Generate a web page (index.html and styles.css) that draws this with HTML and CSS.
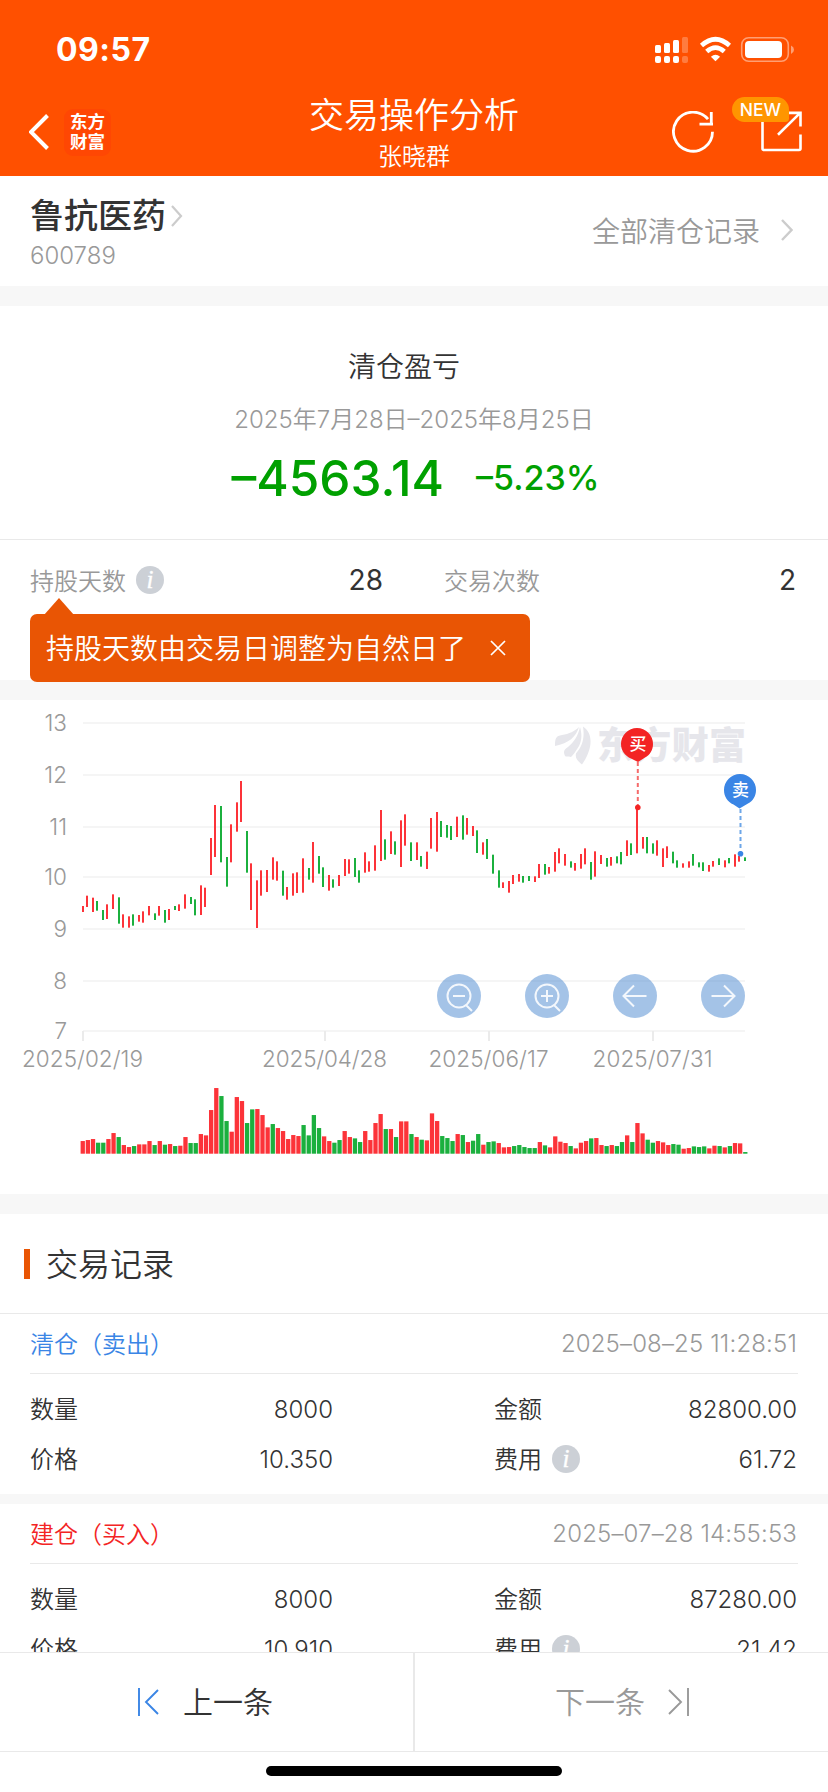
FILE: index.html
```html
<!DOCTYPE html>
<html lang="zh-CN">
<head>
	<meta charset="UTF-8">
	<title>交易操作分析</title>
	<link rel="stylesheet" href="styles.css">
</head>
<body>
<header class="header">
	<div class="status">
		<span class="clock">09:57</span>
		<svg class="status-icons" width="140" height="30" viewBox="655 35 140 30">
			<g fill="#fff">
				<rect x="655" y="45" width="6" height="8" rx="1.5"/>
				<rect x="664" y="43" width="6" height="10" rx="1.5"/>
				<rect x="673" y="40" width="6" height="13" rx="1.5"/>
				<rect x="655" y="56" width="6" height="7" rx="2"/>
				<rect x="664" y="56" width="6" height="7" rx="2"/>
				<rect x="673" y="56" width="6" height="7" rx="2"/>
				<g opacity=".25">
					<rect x="682" y="37" width="6" height="16" rx="1.5"/>
					<rect x="682" y="56" width="6" height="7" rx="2"/>
				</g>
				<rect x="745" y="41" width="37" height="17" rx="4"/>
				<path d="M791 45.500q3 1.500 3 4.300t-3 4.300z" opacity=".45"/>
				<path d="M715.500 61.200l-4.600-4.500q4.600-3.800 9.200 0z"/>
			</g>
			<rect x="741.700" y="37.700" width="46.600" height="23.600" rx="7" fill="none" stroke="#fff" stroke-width="1.600" opacity=".45"/>
			<path d="M701.500 45.500q14-12.500 28 0M706.700 51.500q8.800-7.800 17.600 0" fill="none" stroke="#fff" stroke-width="4.600"/>
		</svg>
	</div>
	<div class="navbar">
		<div class="nav-left">
			<svg width="20" height="36" viewBox="0 0 20 36"><path d="M18.500 1.500L2 18l16.500 16.500" fill="none" stroke="#fff" stroke-width="4"/></svg>
			<div class="logo">东方<br>财富</div>
		</div>
		<div class="nav-title">
			<h1>交易操作分析</h1>
			<p>张晓群</p>
		</div>
		<div class="nav-right">
			<svg width="42" height="42" viewBox="672.500 111 42 42"><path d="M713 131.700A19.500 19.500 0 1 1 708.500 119.200M711.800 112v12.500M700 124.200h13.500" fill="none" stroke="#fff" stroke-width="2.800"/></svg>
			<div class="share">
				<svg width="41" height="41" viewBox="761 111.500 41 41"><path d="M762.500 116v33q0 1.500 1.500 1.500h35q1.500 0 1.500-1.500V135M787 113.400h13.500V127M778 135.200L800.200 113.400" fill="none" stroke="#fff" stroke-width="2.600"/></svg>
				<span class="badge">NEW</span>
			</div>
		</div>
	</div>
</header>

<main class="content">
	<section class="stock">
		<div>
			<h2>鲁抗医药<svg width="12" height="22" viewBox="0 0 12 22"><path d="M1 1l9 10-9 10" fill="none" stroke="#ccc" stroke-width="2.200"/></svg></h2>
			<p class="code">600789</p>
		</div>
		<a class="all-records">全部清仓记录<svg width="12" height="22" viewBox="0 0 12 22"><path d="M1 1l9.500 10L1 21" fill="none" stroke="#ccc" stroke-width="2.400"/></svg></a>
	</section>

	<section class="profit">
		<h3>清仓盈亏</h3>
		<p class="period">2025年7月28日–2025年8月25日</p>
		<div class="amounts">
			<span class="amount">–4563.14</span>
			<span class="percent">–5.23%</span>
		</div>
	</section>

	<section class="stats">
		<div class="stat"><span class="label">持股天数</span><i class="info">i</i><b>28</b></div>
		<div class="stat"><span class="label">交易次数</span><b>2</b></div>
		<div class="tip">
			<span>持股天数由交易日调整为自然日了</span>
			<svg width="16" height="16" viewBox="0 0 16 16"><path d="M1 1l14 14M15 1L1 15" stroke="#fff" stroke-width="1.700"/></svg>
		</div>
	</section>

	<section class="chart">
		<svg id="chart" width="828" height="494" viewBox="0 700 828 494">
			<g id="grid"></g>
			<g id="candles"></g>
			<g id="volumes"></g>
			<g class="watermark">
				<path d="M555 746c0-8 1-10 7-11 7-1 13-4 17-8-3 10-10 16-24 19zM565 756c-2-5-1-6 3-9 6-5 10-11 12-20 2 7 2 13-1 19-3 5-6 9-8 11-3-1-5 0-6-1zM582 764.500c-5-4-7-7-6-11 6-7 9-15 7-27 9 6 9 17 5 27-2 5-4 8-6 11z"/>
				<text x="597" y="759" textLength="149">东方财富</text>
			</g>
			<g class="pin">
				<path d="M637.800 762v44" stroke="#f56b6b" stroke-width="2" stroke-dasharray="4 3"/>
				<circle cx="637.800" cy="807.500" r="2.800" fill="#f32424"/>
				<path d="M637 728a16 16 0 0 1 16 16c0 6-3 11-8 13.500L638 762l-7-3.500c-6-2.500-10-8-10-14.500a16 16 0 0 1 16-16z" fill="#f32424"/>
				<text x="638" y="750">买</text>
			</g>
			<g class="pin">
				<path d="M740.500 809v44" stroke="#6da6e8" stroke-width="2" stroke-dasharray="4 3"/>
				<circle cx="740.500" cy="853.800" r="2.800" fill="#3a85e5"/>
				<path d="M740 774a16 16 0 0 1 16 16c0 6-3 11-8 13.500L739.500 808.500l-6-4c-6-2.500-9.500-8-9.500-14.500a16 16 0 0 1 16-16z" fill="#3a85e5"/>
				<text x="740.500" y="796">卖</text>
			</g>
			<g class="tools">
				<circle cx="459" cy="996" r="22"/>
				<circle cx="547" cy="996" r="22"/>
				<circle cx="635" cy="996" r="22"/>
				<circle cx="723" cy="996" r="22"/>
				<path d="M470.500 996a11.500 11.500 0 1 1-23 0 11.500 11.500 0 1 1 23 0zM453 996h12M466 1005l6 6"/>
				<path d="M558.500 996a11.500 11.500 0 1 1-23 0 11.500 11.500 0 1 1 23 0zM541 996h12M547 990v12M554 1005l6 6"/>
				<path d="M646.500 996h-23M634 985.500L623.500 996l10.500 10.500"/>
				<path d="M711.500 996h23M724 985.500l10.500 10.500-10.500 10.500"/>
			</g>
		</svg>
	</section>

	<section class="records">
		<h3 class="records-title"><span>交易记录</span></h3>
		<article class="record">
			<div class="record-head"><span class="sell">清仓（卖出）</span><time>2025–08–25 11:28:51</time></div>
			<dl>
				<div><dt>数量</dt><dd>8000</dd></div>
				<div><dt>金额</dt><dd>82800.00</dd></div>
				<div><dt>价格</dt><dd>10.350</dd></div>
				<div><dt>费用</dt><i class="info">i</i><dd>61.72</dd></div>
			</dl>
		</article>
		<article class="record">
			<div class="record-head"><span class="buy">建仓（买入）</span><time>2025–07–28 14:55:53</time></div>
			<dl>
				<div><dt>数量</dt><dd>8000</dd></div>
				<div><dt>金额</dt><dd>87280.00</dd></div>
				<div><dt>价格</dt><dd>10.910</dd></div>
				<div><dt>费用</dt><i class="info">i</i><dd>21.42</dd></div>
			</dl>
		</article>
	</section>
</main>

<footer class="footer">
	<div class="pager">
		<a class="prev"><svg width="22" height="28" viewBox="0 0 22 28"><path d="M1 0v28M20 2L8 14l12 12" fill="none" stroke="#3a85e5" stroke-width="1.900"/></svg><span>上一条</span></a>
		<a class="next"><span>下一条</span><svg width="22" height="28" viewBox="0 0 22 28"><path d="M20 0v28M1 2l12 12L1 26" fill="none" stroke="#999" stroke-width="1.900"/></svg></a>
	</div>
	<div class="home-bar"></div>
</footer>
<script src="chart.js"></script>
</body>
</html>
```
FILE: styles.css
```css
* {
    box-sizing: border-box;
    margin: 0;
    padding: 0;
}
body {
    display: flex;
    flex-direction: column;
    width: 828px;
    height: 1792px;
    overflow: hidden;
    background: #fff;
    color: #333;
    font-family: Inter, "Noto Sans CJK SC", sans-serif;
    font-size: 24px;
    font-weight: 350;
}
svg {
    display: block;
    flex: none;
}
h1, h2, h3 {
    font-weight: 350;
}

/* header */
.header {
    flex: none;
    height: 176px;
    background: #ff5000;
    color: #fff;
}
.status {
    display: flex;
    justify-content: space-between;
    height: 88px;
    padding: 35px 33px 0 56px;
}
.clock {
    font-size: 32px;
    font-weight: 700;
    line-height: 30px;
    letter-spacing: 0.5px;
}
.navbar {
    display: grid;
    grid-template-columns: 1fr 300px 1fr;
    height: 88px;
}
.nav-left {
    display: flex;
    align-items: center;
    gap: 15px;
    padding-left: 29px;
}
.logo {
    width: 47px;
    height: 47px;
    padding-top: 3px;
    border-radius: 9px;
    background: #ff4703;
    font-size: 17.5px;
    font-weight: 700;
    line-height: 20px;
    text-align: center;
}
.nav-title {
    text-align: center;
}
.nav-title h1 {
    padding-top: 1px;
    font-size: 35px;
    line-height: 52px;
}
.nav-title p {
    font-size: 24px;
    line-height: 32px;
}
.nav-right {
    display: flex;
    justify-content: flex-end;
    gap: 47px;
    padding: 23px 26px 0 0;
}
.share {
    position: relative;
}
.badge {
    position: absolute;
    left: -29px;
    top: -14px;
    width: 57px;
    height: 25px;
    border-radius: 13px 13px 4px 13px;
    background: #ff9500;
    font-size: 17.5px;
    font-weight: 500;
    line-height: 26px;
    text-align: center;
}

/* stock */
.content {
    flex: 1;
    min-height: 0;
    overflow: hidden;
}
.stock {
    display: flex;
    justify-content: space-between;
    height: 130px;
    padding: 15px 35px 0 30px;
    border-bottom: 20px solid #f7f7f7;
}
.stock h2 {
    display: flex;
    align-items: center;
    gap: 5px;
    font-size: 34px;
    font-weight: 500;
    line-height: 50px;
}
.code {
    color: #999;
    line-height: 30px;
}
.all-records {
    display: flex;
    align-items: center;
    gap: 21px;
    height: 78px;
    color: #999;
    font-size: 28px;
}

/* profit */
.profit {
    height: 233px;
    padding-top: 41px;
    text-align: center;
}
.profit h3 {
    padding-right: 20px;
    font-size: 28px;
    line-height: 40px;
}
.period {
    padding-top: 16px;
    color: #999;
    line-height: 34px;
}
.amounts {
    display: flex;
    justify-content: center;
    align-items: center;
    gap: 32px;
    padding: 6px 0 0 3px;
    color: #00a000;
    font-weight: 500;
    line-height: 70px;
}
.amount {
    font-size: 49.5px;
}
.percent {
    font-size: 34px;
}
.stats {
    position: relative;
    display: grid;
    grid-template-columns: 353px 352px;
    column-gap: 61px;
    height: 161px;
    padding: 20px 30px 0;
    border-top: 1px solid #e9e9e9;
    border-bottom: 20px solid #f7f7f7;
}
.stat {
    display: flex;
    align-items: center;
    height: 40px;
}
.stat .label {
    padding-bottom: 2px;
    color: #999;
}
.stat b {
    margin-left: auto;
    font-size: 28px;
    font-weight: 400;
}
.info {
    width: 28px;
    height: 28px;
    margin-left: 10px;
    border-radius: 50%;
    background: #ccd0d6;
    color: #fff;
    font: italic 25px/27px "Liberation Serif", serif;
    text-align: center;
    -webkit-text-stroke: 0.4px #fff;
}
.tip {
    position: absolute;
    left: 30px;
    top: 74px;
    z-index: 1;
    display: flex;
    align-items: center;
    gap: 24px;
    width: 500px;
    height: 68px;
    padding-left: 16px;
    border-radius: 7px;
    background: #e95504;
    color: #fff;
    font-size: 28px;
}
.tip span {
    padding-bottom: 2px;
}
.tip::before {
    content: "";
    position: absolute;
    left: 14px;
    top: -16px;
    border: solid transparent;
    border-width: 0 15px 17px;
    border-bottom-color: #e95504;
}

/* chart */
.chart {
    height: 514px;
    border-bottom: 20px solid #f7f7f7;
}
.axis {
    fill: #999;
    font-size: 22.5px;
}
.watermark {
    fill: #e6e6eb;
    font-size: 37px;
    font-weight: 900;
}
.pin text {
    fill: #fff;
    font-size: 17px;
    font-weight: 500;
    text-anchor: middle;
}
.tools circle {
    fill: #4182cc;
    fill-opacity: 0.48;
}
.tools path {
    fill: none;
    stroke: #f3f7fc;
    stroke-width: 2;
}

/* records */
.records-title {
    display: flex;
    align-items: center;
    gap: 16px;
    height: 99px;
    padding-left: 24px;
    font-size: 32px;
}
.records-title span {
    padding-bottom: 4px;
}
.records-title::before {
    content: "";
    width: 6px;
    height: 30px;
    background: #e95504;
}
.record {
    height: 191px;
    padding: 0 30px;
    border-bottom: 10px solid #f7f7f7;
}
.records-title + .record {
    border-top: 1px solid #e9e9e9;
}
.record-head {
    display: flex;
    justify-content: space-between;
    align-items: center;
    height: 60px;
    padding-right: 1px;
    border-bottom: 1px solid #e9e9e9;
}
.record-head span, .record dt {
    padding-bottom: 3px;
}
.record time {
    color: #999;
    letter-spacing: 0.15px;
}
.sell {
    color: #3a85e5;
}
.buy {
    color: #f32424;
}
.record dl {
    display: grid;
    grid-template-columns: 303px 303px;
    justify-content: space-between;
    grid-auto-rows: 50px;
    padding: 10px 1px 0 0;
}
.record dl div {
    display: flex;
    align-items: center;
}
.record dd {
    margin-left: auto;
}

/* footer */
.footer {
    flex: none;
    height: 140px;
    background: #fff;
}
.pager {
    display: grid;
    grid-template-columns: 415px 413px;
    height: 100px;
    border: solid #e9e9e9;
    border-width: 1px 0;
}
.pager a {
    display: flex;
    align-items: center;
    justify-content: center;
    gap: 23px;
    font-size: 30px;
}
.pager span {
    padding-bottom: 4px;
}
.prev {
    padding-right: 2px;
    border-right: 2px solid #e9e9e9;
}
.next {
    padding-left: 2px;
    color: #999;
}
.home-bar {
    width: 296px;
    height: 10px;
    margin: 14px auto 0;
    border-radius: 5px;
    background: #000;
}
```
FILE: chart.js
```js
// top, bottom and colour of each day's price line, three units to a pixel from y = 700
var prices = "618-636r 587-621r 593-636r 603-632g 630-660g 613-657r 583-627r 592-671g 643-683r 649-683r 643-677g 645-665r 634-668r 618-646r 640-660g 618-647r 630-668g 627-660r 618-630g 613-633r " +
	"583-626r 591-612g 598-646g 556-645r 563-621r 414-525r 315-471r 318-487g 471-560g 373-487r 307-395r 243-366r 393-518g 490-630r 541-684r 511-587r 510-576r 472-539r 484-542r 512-587g " +
	"561-599r 520-587r 517-579r 475-578r 504-539g 426-548r 468-521g 502-561g 525-572r 538-563g 525-558r 477-528r 478-521r 474-531g 511-548g 457-518r 484-515r 436-512r 330-483r 418-479g " +
	"394-462r 424-464g 361-501r 343-437r 427-483g 427-480r 468-500g 455-507r 354-446r 336-455r 363-411g 375-413g 378-420g 350-411r 346-419g 354-404r 378-408r 391-459g 427-464r 417-477g " +
	"464-521g 511-563g 547-564r 543-578r 525-552r 522-545r 528-548g 528-543g 529-546r 492-534r 492-524g 501-521r 456-515r 445-490r 462-497r 484-503g 489-512r 462-506r 445-493r 486-539g " +
	"454-530r 465-492r 474-500g 471-497r 469-490g 456-493g 421-468r 430-465g 325-460r 411-446r 411-460g 430-461g 421-467r 445-501r 439-474r 455-490g 481-503g 490-503r 484-503r 462-497g " +
	"487-502g 487-513g 495-515r 483-500r 475-495g 481-502r 474-490g 463-500r 468-485r 472-483g";
// height of each volume bar, same units
var volumes = "38r 41r 44r 33g 33g 44r 62r 50g 26r 20r 23g 28r 28r 38r 26g 38r 27g 29r 23g 24r 50r 32g 32g 59r 55r 131r 197r 173g 98g 66r " +
	"170r 158r 92g 133g 134r 116r 79r 89g 77r 68r 44r 56r 53r 86g 55g 116g 77g 52r 38r 33g 41g 68r 50r 46g 35g 68r 41r 92r 119r 74g " +
	"74r 50g 97r 97r 59g 50r 42g 40r 121r 98r 53g 47g 38g 59r 56g 35r 39g 59g 27r 35g 37g 32r 19r 20r 23g 26g 20g 17g 17g 35r " +
	"25g 19r 52r 36r 32r 23g 16r 33r 38r 46g 47r 26r 23g 26r 23g 35g 55r 35g 92r 61r 42g 33g 38r 34r 26r 29g 27g 15r 17r 22g " +
	"20g 22g 16r 24r 23g 19r 23g 32r 31r 5g";
var colors = { r: "#fc3339", g: "#1bb03e" };

var add = function (id, name, attrs, text) {
	var el = document.createElementNS("http://www.w3.org/2000/svg", name);
	for (var key in attrs) {
		el.setAttribute(key, attrs[key]);
	}
	if (text) {
		el.textContent = text;
	}
	document.getElementById(id).appendChild(el);
};
var rect = function (id, x, y, width, height, fill) {
	add(id, "rect", { x: x, y: y, width: width, height: height, fill: fill });
};

// horizontal lines with the price labels
var lines = [723, 775, 827, 877, 929, 981, 1031];
for (var i = 0; i < lines.length; i++) {
	rect("grid", 83, lines[i] - 1, 662, 2, "#f5f5f5");
	add("grid", "text", { x: 67, y: lines[i] + 8, "class": "axis", "text-anchor": "end" }, String(13 - i));
}

// date ticks
var dates = [[83, "2025/02/19", 121], [325, "2025/04/28", 125], [489, "2025/06/17", 120], [653, "2025/07/31", 120]];
dates.forEach(function (d) {
	rect("grid", d[0] - 1, 1031, 2, 10, "#ebebeb");
	add("grid", "text", { x: d[0] - 0.5, y: 1067, "class": "axis", "text-anchor": "middle", textLength: d[2] }, d[1]);
});

prices.split(" ").forEach(function (p, i) {
	var range = p.slice(0, -1).split("-");
	var x = 82 + 2 * Math.floor((i * 5.136 + 0.2) / 2);
	rect("candles", x, 700 + range[0] / 3, 2, (range[1] - range[0]) / 3, colors[p.slice(-1)]);
});

volumes.split(" ").forEach(function (v, i) {
	var h = parseInt(v) / 3;
	rect("volumes", 80.6 + i * 5.136, 1153.7 - h, 4.3, h, colors[v.slice(-1)]);
});
```
